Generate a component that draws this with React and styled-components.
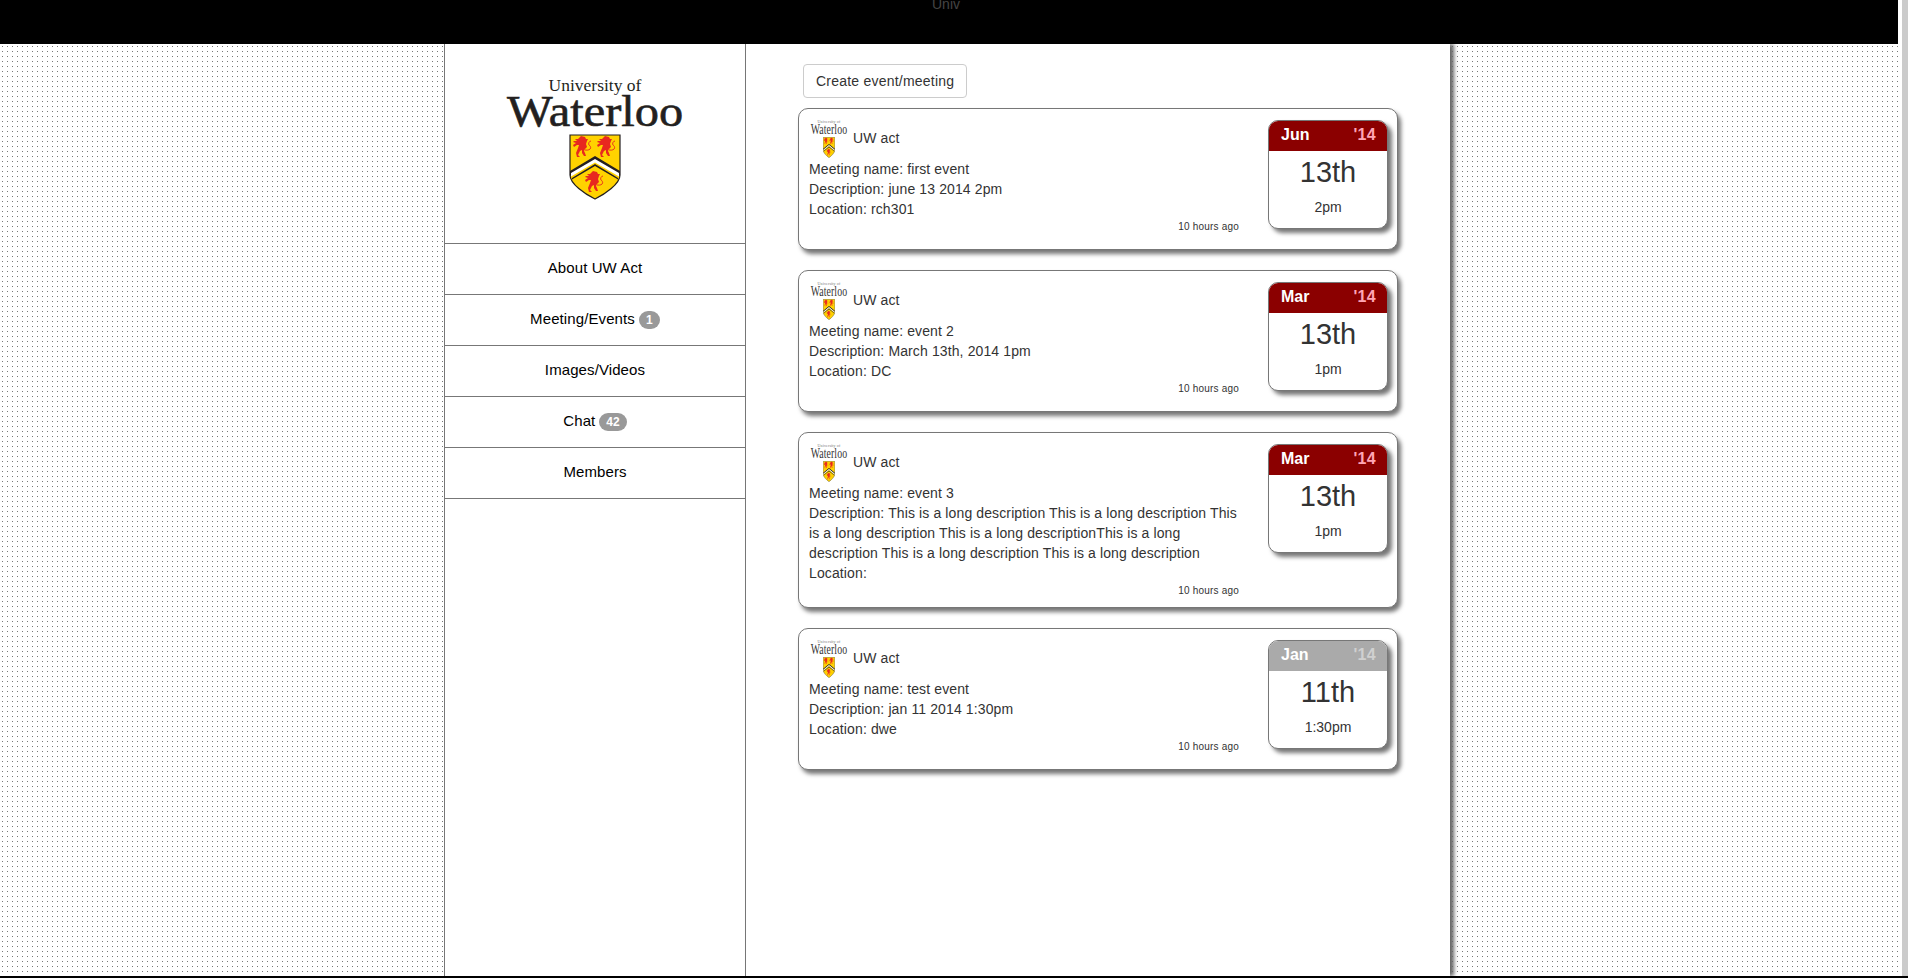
import React from "react";
import styled, { createGlobalStyle } from "styled-components";

const GlobalStyle = createGlobalStyle`
  html, body {
    margin: 0;
    height: 100%;
    overflow: hidden;
    background: #fff;
    font-family: "Liberation Sans", Arial, sans-serif;
    font-size: 14px;
    line-height: 20px;
    color: #333;
  }
`;

const Screen = styled.div`
  display: flex;
  flex-direction: column;
  height: 978px;
`;

const Viewport = styled.div`
  display: flex;
  flex: 1;
  min-height: 0;
`;

const Window = styled.div`
  display: flex;
  flex-direction: column;
  flex: 1;
  min-width: 0;
`;

const Scrollbar = styled.div`
  width: 6px;
  border-left: 4px solid #fff;
  background: #cbcbcb;
`;

const BottomEdge = styled.div`
  height: 2px;
  background: #000;
`;

// clipped brand text, only the lower part of it is on screen
const Topbar = styled.div`
  position: relative;
  z-index: 1;
  height: 44px;
  flex: none;
  background: #000;
  color: #444;
  text-align: center;
  line-height: 8px;
  padding-right: 6px;
  overflow: hidden;
`;

// white stripes over a grey base leave one 1px dot per 5px tile
const Backdrop = styled.div`
  display: flex;
  flex: 1;
  min-height: 0;
  padding-left: 444px;
  background-color: #777;
  background-image:
    linear-gradient(to right, #fff 2px, transparent 2px, transparent 3px, #fff 3px),
    linear-gradient(to bottom, #fff 2px, transparent 2px, transparent 3px, #fff 3px);
  background-size: 5px 5px;
`;

const Sidebar = styled.nav`
  width: 300px;
  flex: none;
  background: #fff;
  border-left: 1px solid #777;
  border-right: 1px solid #777;
`;

const LogoBox = styled.div`
  height: 200px;
  box-sizing: border-box;
  padding-top: 32px;
  border-bottom: 1px solid #777;
`;

const LogoMark = styled.div`
  display: flex;
  flex-direction: column;
  align-items: center;
  font-family: "Liberation Serif", "Times New Roman", serif;
  color: #231f20;
`;

const LogoSmallLine = styled.div`
  font-size: 17.5px;
  line-height: 18px;
`;

const LogoBigLine = styled.div`
  margin-top: 3px;
  font-size: 44px;
  line-height: 30px;
  transform: scaleX(1.1);
  -webkit-text-stroke: 0.6px #231f20;
`;

const Thumb = styled.div`
  display: flex;
  flex-direction: column;
  align-items: center;
  align-self: flex-start;
  width: 36px;
  height: 38px;
  flex: none;
  font-family: "Liberation Serif", "Times New Roman", serif;
  color: #333;
`;

const ThumbTiny = styled.div`
  font-size: 4px;
  line-height: 4px;
  color: #777;
  white-space: nowrap;
`;

const ThumbName = styled.div`
  font-size: 14px;
  line-height: 12px;
  white-space: nowrap;
  transform: scaleX(0.7);
`;

const CrestSvg = styled.svg`
  display: block;
  flex: none;
  width: ${(p) => (p.$small ? "12px" : "52px")};
  height: ${(p) => (p.$small ? "21px" : "66px")};
  margin-top: ${(p) => (p.$small ? "1px" : "7px")};
`;

const NavItem = styled.a`
  display: flex;
  align-items: center;
  justify-content: center;
  gap: 4px;
  height: 51px;
  box-sizing: border-box;
  padding-bottom: 3px;
  border-bottom: 1px solid #777;
  color: #000;
  font-size: 15px;
  letter-spacing: 0.1px;
`;

const Badge = styled.span`
  min-width: 7px;
  margin-top: 3px;
  padding: 3px 7px;
  border-radius: 10px;
  background: #999;
  color: #fff;
  font-size: 12px;
  font-weight: bold;
  line-height: 1;
  letter-spacing: 0;
  text-align: center;
`;

const Main = styled.main`
  width: 704px;
  flex: none;
  box-sizing: border-box;
  padding: 20px 0 0 52px;
  background: #fff;
  box-shadow: 4px 0 4px #666;
`;

const CreateButton = styled.button`
  display: block;
  height: 34px;
  margin: 0 0 10px 5px;
  padding: 6px 12px;
  background: #fff;
  border: 1px solid #ccc;
  border-radius: 4px;
  color: #333;
  font: inherit;
  letter-spacing: 0.22px;
`;

const Card = styled.article`
  display: flex;
  align-items: flex-start;
  width: 600px;
  min-height: 142px;
  box-sizing: border-box;
  margin-bottom: 20px;
  padding: 11px 9px 9px 10px;
  background: #fff;
  border: 1px solid #777;
  border-radius: 10px;
  box-shadow: 3px 4px 4px #777;
`;

const CardBody = styled.div`
  flex: 1;
  min-width: 0;
  padding-right: 26px;
  letter-spacing: 0.12px;
`;

const Poster = styled.div`
  display: flex;
  align-items: center;
  gap: 6px;
  height: 39px;
  box-sizing: border-box;
  padding-bottom: 3px;
  margin-left: 2px;
`;

const TimeAgo = styled.div`
  margin-right: 3px;
  font-size: 10px;
  line-height: 15px;
  letter-spacing: 0.2px;
  text-align: right;
`;

const Calendar = styled.div`
  width: 120px;
  height: 109px;
  flex: none;
  box-sizing: border-box;
  overflow: hidden;
  background: #fff;
  border: 1px solid #777;
  border-radius: 10px;
  box-shadow: 4px 4px 4px #777;
  text-align: center;
`;

const CalendarHead = styled.div`
  display: flex;
  align-items: center;
  justify-content: space-between;
  height: 30px;
  box-sizing: border-box;
  padding: 0 11px 2px 12px;
  background: ${(p) => (p.$past ? "#aaa" : "#8b0000")};
  color: #fff;
  font-size: 16px;
  font-weight: bold;
`;

const CalendarYear = styled.span`
  color: ${(p) => (p.$past ? "#d0d0d0" : "#ffa5b5")};
  letter-spacing: 0.3px;
`;

const CalendarDay = styled.div`
  margin-top: 5px;
  font-size: 29px;
  line-height: 32px;
`;

const CalendarTime = styled.div`
  margin-top: 9px;
  color: #333;
`;

const Lion = ({ x, y }) => (
  <g transform={`translate(${x} ${y})`}>
    <path
      fill="#e8281f"
      d="M7 2 L9 0 L13 1 L14 3 L16 3 L15 5 L14 8 L15 11 L13 13 L12 15 L13 17 L14 20 L12 20 L10 17 L10 14 L8 15 L6 19 L8 21 L5 21 L4 17 L6 12 L7 9 L5 9 L2 11 L1 9 L4 7 L1 6 L2 5 L5 5 L3 3 L6 3 Z"
    />
    <path
      fill="none"
      stroke="#e8281f"
      strokeWidth="0.9"
      d="M13 14 C19 15 20 11 17 9 C16 8 17 5 19 5"
    />
  </g>
);

const Crest = ({ small }) => (
  <CrestSvg $small={small} viewBox="0 0 52 66" preserveAspectRatio="none">
    <path
      fill="#ffd200"
      stroke="#231f20"
      strokeWidth="1.2"
      d="M1 1 H51 V41 C51 50 36 60 26 65 C16 60 1 50 1 41 Z"
    />
    <path fill="#231f20" d="M1 37 L26 22 L51 37 V42 L26 27 L1 42 Z" />
    <path fill="#fff" d="M2 39 L26 25 L50 39 V42.500 L26 28.500 L2 42.500 Z" />
    <path fill="#231f20" d="M3 44 L26 30 L49 44 V45.500 L26 32 L3 45.500 Z" />
    <Lion x="3" y="2" />
    <Lion x="27" y="2" />
    <Lion x="15" y="37" />
  </CrestSvg>
);

const navItems = [
  { label: "About UW Act" },
  { label: "Meeting/Events", badge: "1" },
  { label: "Images/Videos" },
  { label: "Chat", badge: "42" },
  { label: "Members" },
];

const events = [
  {
    name: "first event",
    description: "june 13 2014 2pm",
    location: "rch301",
    month: "Jun",
    day: "13th",
    time: "2pm",
  },
  {
    name: "event 2",
    description: "March 13th, 2014 1pm",
    location: "DC",
    month: "Mar",
    day: "13th",
    time: "1pm",
  },
  {
    name: "event 3",
    description:
      "This is a long description This is a long description This is a long description This is a long descriptionThis is a long description This is a long description This is a long description",
    location: "",
    month: "Mar",
    day: "13th",
    time: "1pm",
  },
  {
    name: "test event",
    description: "jan 11 2014 1:30pm",
    location: "dwe",
    month: "Jan",
    day: "11th",
    time: "1:30pm",
    past: true,
  },
];

const EventCard = ({ event }) => (
  <Card>
    <CardBody>
      <Poster>
        <Thumb>
          <ThumbTiny>University of</ThumbTiny>
          <ThumbName>Waterloo</ThumbName>
          <Crest small />
        </Thumb>
        UW act
      </Poster>
      <div>Meeting name: {event.name}</div>
      <div>Description: {event.description}</div>
      <div>Location: {event.location}</div>
      <TimeAgo>10 hours ago</TimeAgo>
    </CardBody>
    <Calendar>
      <CalendarHead $past={event.past}>
        {event.month}
        <CalendarYear $past={event.past}>'14</CalendarYear>
      </CalendarHead>
      <CalendarDay>{event.day}</CalendarDay>
      <CalendarTime>{event.time}</CalendarTime>
    </Calendar>
  </Card>
);

const App = () => (
  <Screen>
    <GlobalStyle />
    <Viewport>
      <Window>
        <Topbar>Univ</Topbar>
        <Backdrop>
          <Sidebar>
            <LogoBox>
              <LogoMark>
                <LogoSmallLine>University of</LogoSmallLine>
                <LogoBigLine>Waterloo</LogoBigLine>
                <Crest />
              </LogoMark>
            </LogoBox>
            {navItems.map((item) => (
              <NavItem key={item.label}>
                {item.label}
                {item.badge && <Badge>{item.badge}</Badge>}
              </NavItem>
            ))}
          </Sidebar>
          <Main>
            <CreateButton>Create event/meeting</CreateButton>
            {events.map((event) => (
              <EventCard key={event.name} event={event} />
            ))}
          </Main>
        </Backdrop>
      </Window>
      <Scrollbar />
    </Viewport>
    <BottomEdge />
  </Screen>
);

export default App;
